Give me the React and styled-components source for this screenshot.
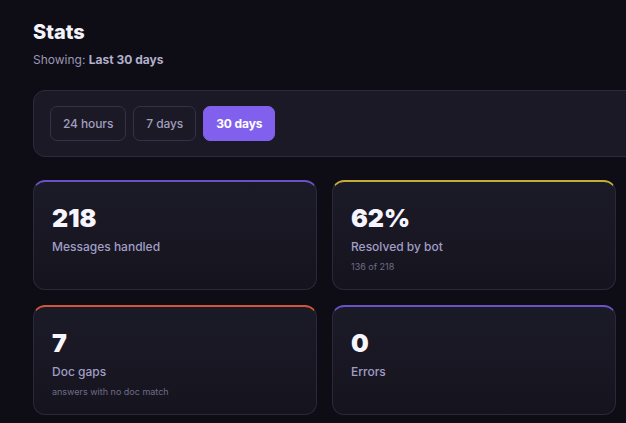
import React from 'react'
import styled, { createGlobalStyle } from 'styled-components'

const Global = createGlobalStyle`
  html, body {
    margin: 0;
    background: #0e0d16;
    overflow: hidden;
  }
  body {
    font-family: Inter, "Noto Sans", sans-serif;
    color: #ecebf5;
  }
`

const Page = styled.div`
  padding: 19px 0 0 33px;
  width: 640px;
`

const Title = styled.h1`
  margin: 0;
  font-size: 20px;
  font-weight: 800;
  color: #f4f3fb;
  line-height: 26px;
`

const Showing = styled.div`
  margin-top: 7px;
  font-size: 12px;
  color: #9a97b3;
  b {
    font-weight: 700;
    color: #b3b0cc;
  }
`

const Panel = styled.div`
  margin-top: 23px;
  display: flex;
  gap: 7px;
  padding: 15px 16px;
  background: #1a1925;
  border: 1px solid #2c2a3d;
  border-radius: 12px;
`

const RangeButton = styled.button`
  height: 35px;
  padding: 0 12px;
  font-family: inherit;
  font-size: 12px;
  font-weight: ${p => (p.active ? 700 : 500)};
  letter-spacing: -0.1px;
  color: ${p => (p.active ? '#ffffff' : '#a19ebd')};
  background: ${p => (p.active ? '#8160ee' : 'transparent')};
  border: 1px solid ${p => (p.active ? '#8160ee' : '#34324a')};
  border-radius: 7px;
`

const Grid = styled.div`
  margin-top: 23px;
  display: grid;
  grid-template-columns: repeat(2, 284px);
  gap: 15px;
`

const Card = styled.div`
  height: 110px;
  box-sizing: border-box;
  padding: 20px 18px;
  background: linear-gradient(180deg, #1b1a27 0%, #15141e 100%);
  border: 1px solid #2a283a;
  border-top: 2px solid ${p => p.accent};
  border-radius: 12px;
`

const Value = styled.div`
  font-size: 25px;
  font-weight: 900;
  line-height: 32px;
  color: #f6f5fd;
`

const Label = styled.div`
  margin-top: 5px;
  font-size: 12px;
  font-weight: 500;
  color: #a19ec6;
`

const Note = styled.div`
  margin-top: 7px;
  font-size: 9px;
  color: #6f6c87;
`

const stats = [
  { value: '218', label: 'Messages handled', accent: '#6a52c6' },
  { value: '62%', label: 'Resolved by bot', note: '136 of 218', accent: '#c4ac36' },
  { value: '7', label: 'Doc gaps', note: 'answers with no doc match', accent: '#cf573a' },
  { value: '0', label: 'Errors', accent: '#6a52c6' },
]

export default function App() {
  return (
    <Page>
      <Global />
      <Title>Stats</Title>
      <Showing>Showing: <b>Last 30 days</b></Showing>
      <Panel>
        <RangeButton>24 hours</RangeButton>
        <RangeButton>7 days</RangeButton>
        <RangeButton active>30 days</RangeButton>
      </Panel>
      <Grid>
        {stats.map(s => (
          <Card key={s.label} accent={s.accent}>
            <Value>{s.value}</Value>
            <Label>{s.label}</Label>
            {s.note && <Note>{s.note}</Note>}
          </Card>
        ))}
      </Grid>
    </Page>
  )
}
